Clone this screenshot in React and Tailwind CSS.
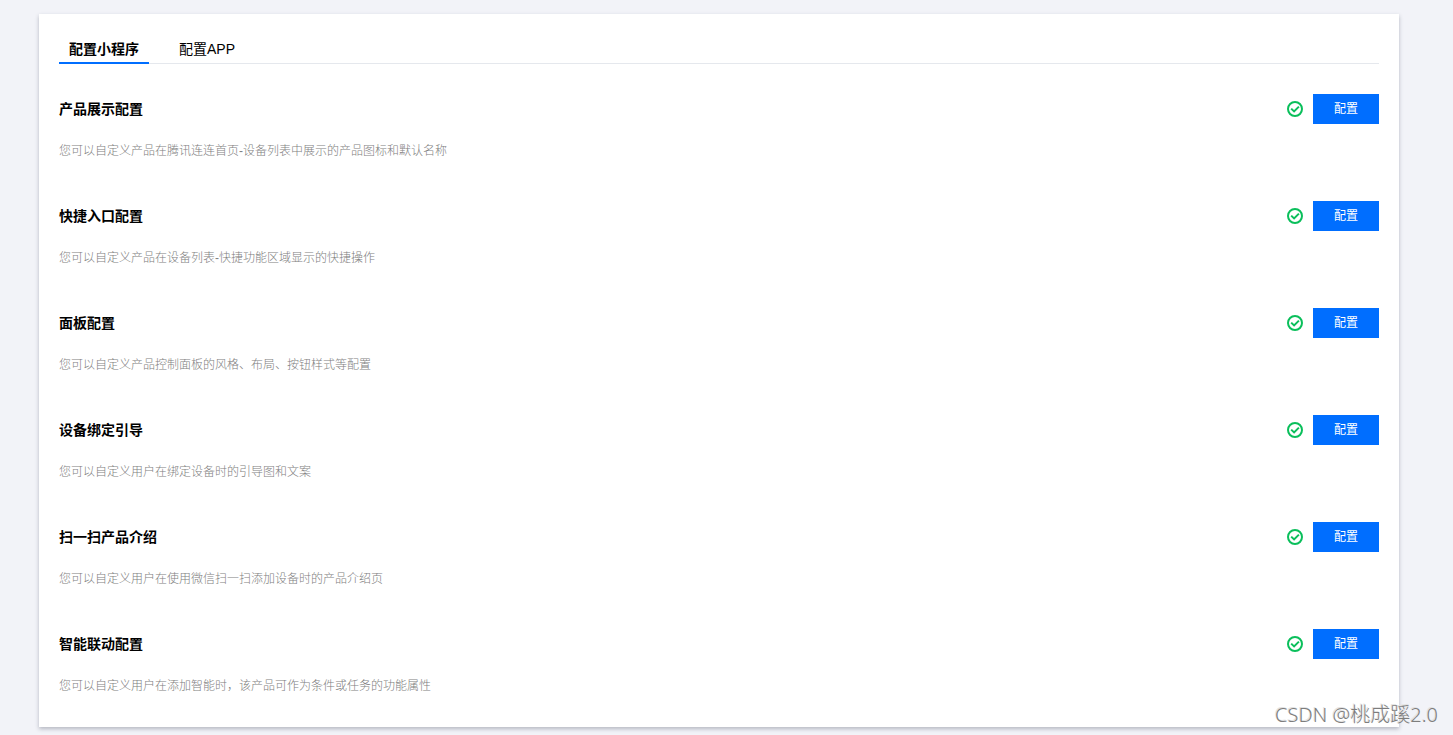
import { useState } from "react";

const tabs = ["配置小程序", "配置APP"];

const items = [
  { title: "产品展示配置", desc: "您可以自定义产品在腾讯连连首页-设备列表中展示的产品图标和默认名称" },
  { title: "快捷入口配置", desc: "您可以自定义产品在设备列表-快捷功能区域显示的快捷操作" },
  { title: "面板配置", desc: "您可以自定义产品控制面板的风格、布局、按钮样式等配置" },
  { title: "设备绑定引导", desc: "您可以自定义用户在绑定设备时的引导图和文案" },
  { title: "扫一扫产品介绍", desc: "您可以自定义用户在使用微信扫一扫添加设备时的产品介绍页" },
  { title: "智能联动配置", desc: "您可以自定义用户在添加智能时，该产品可作为条件或任务的功能属性" },
];

function CheckIcon() {
  return (
    <svg viewBox="0 0 16 16" className="size-4 shrink-0" fill="none" stroke="#0abf5b" strokeWidth="2" aria-label="已配置" role="img">
      <circle cx="8" cy="8" r="7" />
      <path d="M4.2 7.6 L7.1 10.4 L11.9 5.6" />
    </svg>
  );
}

function ConfigRow({ title, desc }) {
  return (
    <section>
      <div className="flex h-[30px] items-center justify-between">
        <h2 className="text-sm font-bold">{title}</h2>
        <div className="flex items-center gap-2.5">
          <CheckIcon />
          <button type="button" aria-label={`配置 ${title}`} className="h-[30px] w-[66px] bg-[#006eff] text-xs text-white">
            配置
          </button>
        </div>
      </div>
      <p className="mt-[17px] text-xs leading-5 font-light text-[#808080]">{desc}</p>
    </section>
  );
}

export default function App() {
  const [active, setActive] = useState(0);
  return (
    <div className="relative min-h-screen bg-[#f2f3f8] pt-3.5 pr-[54px] pb-2 pl-[39px] font-['Liberation_Sans','Noto_Sans_CJK_SC',sans-serif] text-black">
      <main className="bg-white px-5 pt-5 pb-[31px] shadow-[0_2px_4px_rgba(54,58,80,0.32)]">
        <div role="tablist" className="flex h-[30px] gap-5 border-b border-[#e5e8ed]">
          {tabs.map((t, i) => (
            <button
              key={t}
              type="button"
              role="tab"
              aria-selected={i === active}
              onClick={() => setActive(i)}
              className={
                i === active
                  ? "h-[30px] border-b-2 border-[#006eff] px-2.5 pt-0.5 text-sm font-bold"
                  : "h-[30px] border-b-2 border-transparent px-2.5 pt-0.5 text-sm"
              }
            >
              {t}
            </button>
          ))}
        </div>
        <div className="mt-[30px] flex flex-col gap-10">
          {items.map((it) => (
            <ConfigRow key={it.title} {...it} />
          ))}
        </div>
      </main>
      <div className="pointer-events-none absolute right-[15px] bottom-1 font-['Noto_Sans','Noto_Sans_CJK_SC',sans-serif] text-xl leading-8 font-light whitespace-nowrap text-[#7d7d7d] [text-shadow:-1px_-1px_0_#e2e2e2]">
        CSDN @桃成蹊2.0
      </div>
    </div>
  );
}
